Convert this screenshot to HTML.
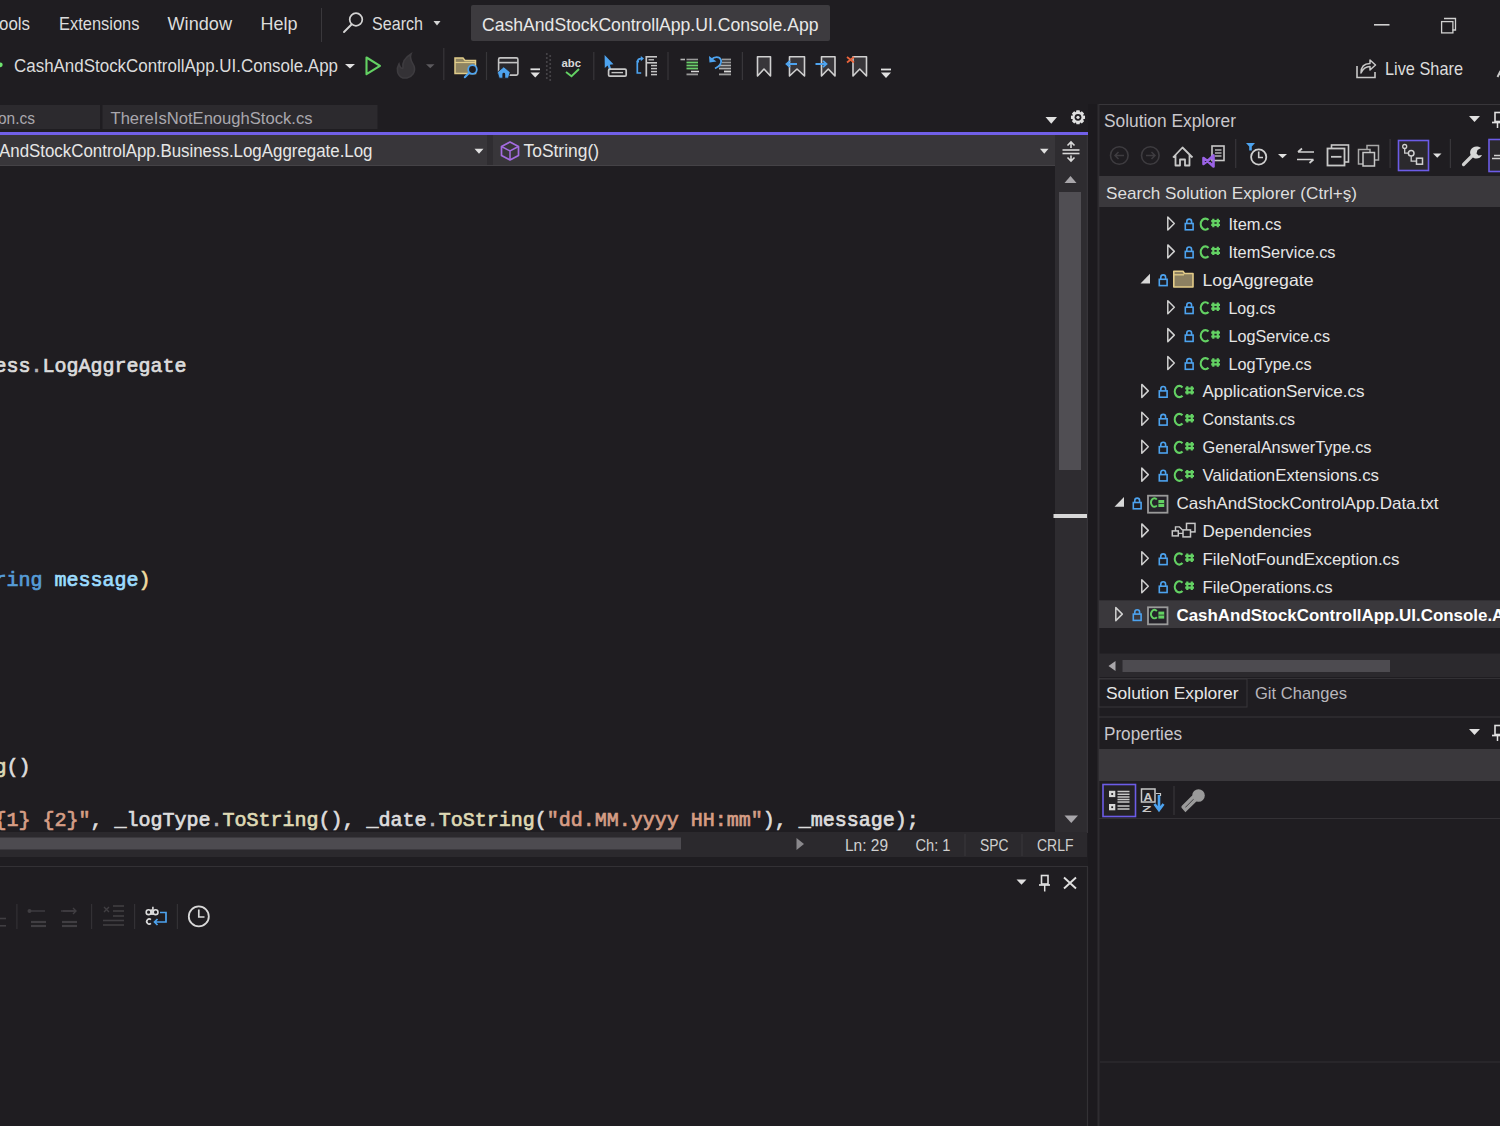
<!DOCTYPE html>
<html><head><meta charset="utf-8"><style>html,body{margin:0;padding:0;background:#1f1d21;overflow:hidden}svg{display:block}</style></head>
<body><svg width="1500" height="1126" viewBox="0 0 1500 1126">
<rect x="0" y="0" width="1500" height="1126" fill="#1f1d21" />
<text x="-1" y="30" font-family="Liberation Sans" font-size="19" fill="#dcdcdc" textLength="31.0" lengthAdjust="spacingAndGlyphs" >ools</text>
<text x="59" y="30" font-family="Liberation Sans" font-size="19" fill="#dcdcdc" textLength="80.5" lengthAdjust="spacingAndGlyphs" >Extensions</text>
<text x="167.5" y="30" font-family="Liberation Sans" font-size="19" fill="#dcdcdc" textLength="64.5" lengthAdjust="spacingAndGlyphs" >Window</text>
<text x="260.5" y="30" font-family="Liberation Sans" font-size="19" fill="#dcdcdc" textLength="37.0" lengthAdjust="spacingAndGlyphs" >Help</text>
<line x1="321.5" y1="8" x2="321.5" y2="42" stroke="#3a383c" stroke-width="1" />
<text x="372" y="30" font-family="Liberation Sans" font-size="19" fill="#dcdcdc" textLength="51.0" lengthAdjust="spacingAndGlyphs" >Search</text>
<rect x="471" y="5" width="359" height="36" fill="#3d3b3f"  rx="2"/>
<text x="482" y="31" font-family="Liberation Sans" font-size="18.5" fill="#e8e8e8" textLength="336.5" lengthAdjust="spacingAndGlyphs" >CashAndStockControllApp.UI.Console.App</text>
<text x="14" y="71.6" font-family="Liberation Sans" font-size="18" fill="#dcdcdc" textLength="324.0" lengthAdjust="spacingAndGlyphs" >CashAndStockControllApp.UI.Console.App</text>
<text x="1385" y="74.5" font-family="Liberation Sans" font-size="18.5" fill="#dcdcdc" textLength="78.0" lengthAdjust="spacingAndGlyphs" >Live Share</text>
<rect x="0" y="105" width="100" height="24" fill="#2c2a2e" />
<rect x="102.5" y="105" width="275" height="24" fill="#2c2a2e" />
<text x="-2" y="124" font-family="Liberation Sans" font-size="17" fill="#a9a7ad" textLength="37.0" lengthAdjust="spacingAndGlyphs" >on.cs</text>
<text x="110.5" y="124" font-family="Liberation Sans" font-size="17" fill="#a9a7ad" textLength="202.0" lengthAdjust="spacingAndGlyphs" >ThereIsNotEnoughStock.cs</text>
<rect x="0" y="132" width="1088" height="3" fill="#7160e8" />
<rect x="0" y="135" width="1055" height="30" fill="#38363a" />
<rect x="487" y="135" width="6" height="30" fill="#2f2d31" />
<line x1="0" y1="165.5" x2="1055" y2="165.5" stroke="#444246" stroke-width="1" />
<text x="-1" y="156.5" font-family="Liberation Sans" font-size="17.5" fill="#e6e6e6" textLength="373.5" lengthAdjust="spacingAndGlyphs" >AndStockControlApp.Business.LogAggregate.Log</text>
<text x="523.5" y="157" font-family="Liberation Sans" font-size="17.5" fill="#e6e6e6" textLength="75.5" lengthAdjust="spacingAndGlyphs" >ToString()</text>
<rect x="1088" y="104" width="9.5" height="1022" fill="#1c1a1e" />
<rect x="1055" y="135" width="33" height="698" fill="#2e2c30" />
<line x1="1087.3" y1="135" x2="1087.3" y2="833" stroke="#3a383c" stroke-width="1" />
<rect x="1059" y="192" width="22" height="278" fill="#504e53" />
<rect x="1053.5" y="514" width="33.5" height="4" fill="#d8d8d8" />
<text x="-5.5" y="372.2" font-family="Liberation Mono" font-size="20" stroke-width="0.7" xml:space="preserve"><tspan fill="#dcdcdc" stroke="#dcdcdc">ess</tspan><tspan fill="#b4b4b4" stroke="#b4b4b4">.</tspan><tspan fill="#dcdcdc" stroke="#dcdcdc">LogAggregate</tspan></text>
<text x="-5.5" y="586.0" font-family="Liberation Mono" font-size="20" stroke-width="0.7" xml:space="preserve"><tspan fill="#569cd6" stroke="#569cd6">ring</tspan><tspan fill="#dcdcdc" stroke="#dcdcdc"> </tspan><tspan fill="#9cdcfe" stroke="#9cdcfe">message</tspan><tspan fill="#f0dca0" stroke="#f0dca0">)</tspan></text>
<text x="-5.5" y="773.0" font-family="Liberation Mono" font-size="20" stroke-width="0.7" xml:space="preserve"><tspan fill="#ded9b4" stroke="#ded9b4">g</tspan><tspan fill="#dcdcdc" stroke="#dcdcdc">()</tspan></text>
<text x="-5.5" y="826.4" font-family="Liberation Mono" font-size="20" stroke-width="0.7" xml:space="preserve"><tspan fill="#d69d85" stroke="#d69d85">{1} {2}"</tspan><tspan fill="#dcdcdc" stroke="#dcdcdc">, </tspan><tspan fill="#dcdcdc" stroke="#dcdcdc">_logType</tspan><tspan fill="#b4b4b4" stroke="#b4b4b4">.</tspan><tspan fill="#ded9b4" stroke="#ded9b4">ToString</tspan><tspan fill="#dcdcdc" stroke="#dcdcdc">(), </tspan><tspan fill="#dcdcdc" stroke="#dcdcdc">_date</tspan><tspan fill="#b4b4b4" stroke="#b4b4b4">.</tspan><tspan fill="#ded9b4" stroke="#ded9b4">ToString</tspan><tspan fill="#dcdcdc" stroke="#dcdcdc">(</tspan><tspan fill="#d69d85" stroke="#d69d85">"dd.MM.yyyy HH:mm"</tspan><tspan fill="#dcdcdc" stroke="#dcdcdc">), </tspan><tspan fill="#dcdcdc" stroke="#dcdcdc">_message</tspan><tspan fill="#dcdcdc" stroke="#dcdcdc">);</tspan></text>
<rect x="0" y="832" width="1087" height="25" fill="#2b292d" />
<rect x="0" y="837.5" width="681" height="12" fill="#4d4b50" />
<text x="845" y="850.5" font-family="Liberation Sans" font-size="16.5" fill="#cfcfcf" textLength="43.0" lengthAdjust="spacingAndGlyphs" >Ln: 29</text>
<text x="915.5" y="850.5" font-family="Liberation Sans" font-size="16.5" fill="#cfcfcf" textLength="35.0" lengthAdjust="spacingAndGlyphs" >Ch: 1</text>
<line x1="965" y1="834" x2="965" y2="856" stroke="#3a383c" stroke-width="1" />
<text x="980" y="850.5" font-family="Liberation Sans" font-size="16.5" fill="#cfcfcf" textLength="28.5" lengthAdjust="spacingAndGlyphs" >SPC</text>
<line x1="1022" y1="834" x2="1022" y2="856" stroke="#3a383c" stroke-width="1" />
<text x="1037" y="850.5" font-family="Liberation Sans" font-size="16.5" fill="#cfcfcf" textLength="36.5" lengthAdjust="spacingAndGlyphs" >CRLF</text>
<line x1="0" y1="866.5" x2="1088" y2="866.5" stroke="#333135" stroke-width="1" />
<rect x="1097.5" y="104" width="2" height="1022" fill="#2e2c30" />
<line x1="1099" y1="104.5" x2="1500" y2="104.5" stroke="#38363a" stroke-width="1" />
<text x="1104" y="127" font-family="Liberation Sans" font-size="17.5" fill="#c9c7cc" textLength="132.0" lengthAdjust="spacingAndGlyphs" >Solution Explorer</text>
<rect x="1099" y="176" width="401" height="31" fill="#3a383c" />
<text x="1106" y="198.5" font-family="Liberation Sans" font-size="17" fill="#dedede" textLength="251.0" lengthAdjust="spacingAndGlyphs" >Search Solution Explorer (Ctrl+ş)</text>
<circle cx="356" cy="19.5" r="6.3" fill="none" stroke="#d4d4d4" stroke-width="1.7"/>
<line x1="351.5" y1="24.5" x2="344" y2="32" stroke="#d4d4d4" stroke-width="1.9" stroke-linecap="round"/>
<path d="M433.5 21L440.5 21L437.0 25.5Z" fill="#d4d4d4"/>
<rect x="1374" y="24" width="15.5" height="1.6" fill="#d0d0d0" />
<path d="M1444 18.5H1455.5V30H1452.5" fill="none" stroke="#d0d0d0" stroke-width="1.3" />
<rect x="1441.6" y="21.6" width="11.3" height="11.3" fill="none"  stroke="#d0d0d0" stroke-width="1.3"/>
<circle cx="0.3" cy="64.8" r="2.4" fill="#6ee36e"/>
<path d="M345 64L355 64L350.0 68.5Z" fill="#e0e0e0"/>
<path d="M366.5 57.5L380 65.8L366.5 74.2Z" fill="none" stroke="#63d163" stroke-width="2.1" stroke-linejoin="round"/>
<path d="M403 78C397 76 396 69 399 64C400 68 402 69 403 68C402 62 406 57 411 54C409 59 412 62 414 66C416 72 412 77 407 78Z" fill="#343236" stroke="#3d3b3f" stroke-width="1.6" />
<path d="M426 64.2L434.5 64.2L430.25 68.2Z" fill="#5c5a5e"/>
<line x1="443.8" y1="48" x2="443.8" y2="80" stroke="#38363a" stroke-width="1.2" />
<path d="M455 58H463L465 60.5H475.5V73.5H455Z" fill="#8f8462" stroke="#e2cd8a" stroke-width="1.5" />
<line x1="455" y1="62.5" x2="475.5" y2="62.5" stroke="#e2cd8a" stroke-width="1.2" />
<circle cx="472.5" cy="69.5" r="4.3" fill="#1f1d21" stroke="#4da3ef" stroke-width="1.8"/>
<line x1="469.3" y1="72.8" x2="464.8" y2="77.3" stroke="#4da3ef" stroke-width="2" stroke-linecap="round"/>
<line x1="486.5" y1="52" x2="486.5" y2="80" stroke="#38363a" stroke-width="1.2" />
<rect x="498.6" y="57.9" width="19.3" height="17.2" fill="#29272b"  rx="1.5" stroke="#c4c4c4" stroke-width="1.6"/>
<line x1="498.6" y1="62.6" x2="517.9" y2="62.6" stroke="#c4c4c4" stroke-width="1.6" />
<path d="M503.8 66.8L510.2 72.2L508.4 78.2H499.2L497.4 72.2Z" fill="#4da3ef" stroke="#1f1d21" stroke-width="0.8" />
<path d="M502.4 78.2V74.2A1.4 1.4 0 0 1 505.2 74.2V78.2Z" fill="#1f1d21" />
<rect x="530.5" y="68.4" width="9.5" height="1.8" fill="#e0e0e0" />
<path d="M530.5 72.5L540 72.5L535.25 77.5Z" fill="#e0e0e0"/>
<circle cx="546.8" cy="54" r="1" fill="#4a484c"/>
<circle cx="550.2" cy="56" r="1" fill="#4a484c"/>
<circle cx="546.8" cy="58" r="1" fill="#4a484c"/>
<circle cx="550.2" cy="60" r="1" fill="#4a484c"/>
<circle cx="546.8" cy="62" r="1" fill="#4a484c"/>
<circle cx="550.2" cy="64" r="1" fill="#4a484c"/>
<circle cx="546.8" cy="66" r="1" fill="#4a484c"/>
<circle cx="550.2" cy="68" r="1" fill="#4a484c"/>
<circle cx="546.8" cy="70" r="1" fill="#4a484c"/>
<circle cx="550.2" cy="72" r="1" fill="#4a484c"/>
<circle cx="546.8" cy="74" r="1" fill="#4a484c"/>
<circle cx="550.2" cy="76" r="1" fill="#4a484c"/>
<circle cx="546.8" cy="78" r="1" fill="#4a484c"/>
<circle cx="550.2" cy="80" r="1" fill="#4a484c"/>
<text x="561.5" y="66.8" font-family="Liberation Sans" font-size="11" fill="#d8d8d8" textLength="19.5" lengthAdjust="spacingAndGlyphs" font-weight="bold" >abc</text>
<path d="M566 72L571.5 76.2L579 69" fill="none" stroke="#63d163" stroke-width="1.9" />
<line x1="593.8" y1="52" x2="593.8" y2="80" stroke="#38363a" stroke-width="1.2" />
<path d="M604.6 55L604.8 68L607.6 65.5L609.5 70.5L611.5 69.7L609.8 64.8L613.5 64.3Z" fill="#4da3ef" />
<rect x="608.6" y="69.2" width="17.6" height="6.9" fill="none"  rx="1.2" stroke="#c8c8c8" stroke-width="1.7"/>
<line x1="611.5" y1="72.6" x2="623" y2="72.6" stroke="#c4c4c4" stroke-width="1.4" />
<path d="M641.2 73H637.3V61.6H639" fill="none" stroke="#4da3ef" stroke-width="1.7" />
<path d="M637.5 62C637.5 59.5 639 58.6 641.2 58.6" fill="none" stroke="#4da3ef" stroke-width="1.7" />
<path d="M640.8 55.9L644 58.6L640.8 61.3Z" fill="#4da3ef" />
<line x1="646.3" y1="56" x2="646.3" y2="76.5" stroke="#c8c8c8" stroke-width="1.7" />
<line x1="646.3" y1="56.8" x2="657" y2="56.8" stroke="#c8c8c8" stroke-width="1.6" />
<line x1="648.5" y1="59.8" x2="654" y2="59.8" stroke="#c8c8c8" stroke-width="1.3" />
<line x1="646.3" y1="62.8" x2="657" y2="62.8" stroke="#c8c8c8" stroke-width="1.6" />
<line x1="651" y1="65.6" x2="657" y2="65.6" stroke="#c4c4c4" stroke-width="1.5" />
<line x1="651" y1="68.6" x2="657" y2="68.6" stroke="#c4c4c4" stroke-width="1.5" />
<line x1="651" y1="71.6" x2="657" y2="71.6" stroke="#c4c4c4" stroke-width="1.5" />
<line x1="651" y1="74.6" x2="657" y2="74.6" stroke="#c4c4c4" stroke-width="1.5" />
<line x1="668" y1="52" x2="668" y2="80" stroke="#38363a" stroke-width="1.2" />
<line x1="680.5" y1="59.5" x2="685" y2="59.5" stroke="#b8b8b8" stroke-width="1.6" />
<line x1="686.5" y1="59.5" x2="698" y2="59.5" stroke="#9a9a9a" stroke-width="1.6" />
<line x1="686.5" y1="62.5" x2="698" y2="62.5" stroke="#6cd06c" stroke-width="1.8" />
<line x1="686.5" y1="65.5" x2="698" y2="65.5" stroke="#6cd06c" stroke-width="1.8" />
<line x1="686.5" y1="68.5" x2="698" y2="68.5" stroke="#6cd06c" stroke-width="1.8" />
<line x1="691" y1="71.5" x2="699" y2="71.5" stroke="#d8d8d8" stroke-width="1.5" />
<line x1="686.5" y1="74.4" x2="698" y2="74.4" stroke="#9a9a9a" stroke-width="1.8" />
<line x1="722" y1="59.5" x2="731" y2="59.5" stroke="#9a9a9a" stroke-width="1.8" />
<line x1="722" y1="62.5" x2="731" y2="62.5" stroke="#9a9a9a" stroke-width="1.8" />
<line x1="719" y1="65.5" x2="731" y2="65.5" stroke="#b0b0b0" stroke-width="1.8" />
<line x1="719" y1="68.5" x2="731" y2="68.5" stroke="#b0b0b0" stroke-width="1.8" />
<line x1="724" y1="71.5" x2="731" y2="71.5" stroke="#d8d8d8" stroke-width="1.8" />
<line x1="719" y1="74.4" x2="731" y2="74.4" stroke="#a0a0a0" stroke-width="1.8" />
<path d="M711.5 59.5C714 56.5 719.5 56 721 60C722 63.5 719 66.5 715 68.5" fill="none" stroke="#4da3ef" stroke-width="1.9" />
<path d="M709 56L716.5 61.5L709.5 62.5Z" fill="#4da3ef" />
<line x1="742.4" y1="52" x2="742.4" y2="80" stroke="#38363a" stroke-width="1.2" />
<path d="M757.5 56.8H770.5V76L764.0 69L757.5 76Z" fill="#38363a" stroke="#d0d0d0" stroke-width="1.6" stroke-linejoin="round"/>
<path d="M789.5 56.8H804.5V76L797.0 69L789.5 76Z" fill="#38363a" stroke="#d0d0d0" stroke-width="1.6" stroke-linejoin="round"/>
<path d="M797 64H786.5M790 60.8L786.5 64L790 67.2" fill="none" stroke="#4da3ef" stroke-width="1.8" />
<path d="M821.5 56.8H835V76L828.25 69L821.5 76Z" fill="#38363a" stroke="#d0d0d0" stroke-width="1.6" stroke-linejoin="round"/>
<path d="M815.5 64H826.5M823 60.8L826.5 64L823 67.2" fill="none" stroke="#4da3ef" stroke-width="1.8" />
<path d="M853 56.8H866.5V76L859.75 69L853 76Z" fill="#38363a" stroke="#d0d0d0" stroke-width="1.6" stroke-linejoin="round"/>
<path d="M847 57L854 62.5M854 57L847 62.5" fill="none" stroke="#e8643c" stroke-width="1.8" />
<rect x="881" y="68.6" width="10" height="1.8" fill="#e0e0e0" />
<path d="M881 72.6L891 72.6L886.0 78Z" fill="#e0e0e0"/>
<path d="M1357 66V77.5H1375V72" fill="none" stroke="#c8c8c8" stroke-width="1.6" />
<path d="M1361 73C1361 66 1365 63.5 1370 63.5V60L1375.5 65L1370 70V66.5C1366 66.5 1363 68.5 1361 73Z" fill="none" stroke="#c8c8c8" stroke-width="1.5" stroke-linejoin="round"/>
<line x1="1497.5" y1="77" x2="1500.5" y2="71" stroke="#c8c8c8" stroke-width="2" />
<path d="M1045.5 117L1057 117L1051.25 123.8Z" fill="#e0e0e0"/>
<path d="M1085.03 115.73L1085.03 118.87L1082.75 119.42L1082.86 119.16L1084.08 121.16L1081.86 123.38L1079.86 122.16L1080.12 122.05L1079.57 124.33L1076.43 124.33L1075.88 122.05L1076.14 122.16L1074.14 123.38L1071.92 121.16L1073.14 119.16L1073.25 119.42L1070.97 118.87L1070.97 115.73L1073.25 115.18L1073.14 115.44L1071.92 113.44L1074.14 111.22L1076.14 112.44L1075.88 112.55L1076.43 110.27L1079.57 110.27L1080.12 112.55L1079.86 112.44L1081.86 111.22L1084.08 113.44L1082.86 115.44L1082.75 115.18Z" fill="#e0e0e0" />
<circle cx="1078" cy="117.3" r="3.4" fill="#1f1d21"/>
<circle cx="1078" cy="117.3" r="1.6" fill="#e0e0e0"/>
<path d="M474.5 148.8L483.5 148.8L479.0 153.8Z" fill="#e0e0e0"/>
<path d="M1040 148.8L1048.5 148.8L1044.25 153.8Z" fill="#e0e0e0"/>
<path d="M510 142L518.5 146.5V155.5L510 160L501.5 155.5V146.5Z" fill="none" stroke="#a46ce0" stroke-width="1.7" stroke-linejoin="round"/>
<path d="M501.5 146.5L510 151L518.5 146.5M510 151V160" fill="none" stroke="#a46ce0" stroke-width="1.5" />
<line x1="1062.5" y1="150" x2="1079.5" y2="150" stroke="#d8d8d8" stroke-width="1.6" />
<line x1="1062.5" y1="153.5" x2="1079.5" y2="153.5" stroke="#d8d8d8" stroke-width="1.6" />
<path d="M1071 142V148M1067.5 145.5L1071 142L1074.5 145.5" fill="none" stroke="#d8d8d8" stroke-width="1.6" />
<path d="M1071 155.5V161M1067.5 157.5L1071 161L1074.5 157.5" fill="none" stroke="#d8d8d8" stroke-width="1.6" />
<path d="M1064.5 183H1076.5L1070.5 176Z" fill="#a8a6aa"/>
<path d="M1064.5 815.5L1078 815.5L1071.25 823Z" fill="#a8a6aa"/>
<path d="M796.5 838V850L804 844Z" fill="#8a888c"/>
<path d="M1016.5 879.5L1026.5 879.5L1021.5 884.8Z" fill="#e0e0e0"/>
<rect x="1041.5" y="875.5" width="6.5" height="8.5" fill="none"  stroke="#e0e0e0" stroke-width="1.6"/>
<line x1="1039" y1="885" x2="1050" y2="885" stroke="#e0e0e0" stroke-width="1.7" />
<line x1="1044.7" y1="885" x2="1044.7" y2="891.5" stroke="#e0e0e0" stroke-width="1.5" />
<path d="M1064 877.5L1076 888.5M1076 877.5L1064 888.5" fill="none" stroke="#e0e0e0" stroke-width="1.9" />
<line x1="0" y1="918.5" x2="6" y2="918.5" stroke="#403e42" stroke-width="1.6" />
<line x1="0" y1="925.8" x2="6" y2="925.8" stroke="#403e42" stroke-width="1.6" />
<line x1="16.9" y1="904" x2="16.9" y2="929" stroke="#333135" stroke-width="1.2" />
<line x1="30" y1="911" x2="45" y2="911" stroke="#403e42" stroke-width="1.4" />
<line x1="31" y1="922" x2="46" y2="922" stroke="#403e42" stroke-width="2.2" />
<line x1="31" y1="926" x2="46" y2="926" stroke="#403e42" stroke-width="2.2" />
<line x1="61" y1="911" x2="76" y2="911" stroke="#403e42" stroke-width="1.4" />
<line x1="62" y1="922" x2="77" y2="922" stroke="#403e42" stroke-width="2.2" />
<line x1="62" y1="926" x2="77" y2="926" stroke="#403e42" stroke-width="2.2" />
<circle cx="29.5" cy="911" r="2" fill="#403e42"/>
<path d="M63 911H76M73 908L76 911L73 914" fill="none" stroke="#403e42" stroke-width="1.4" />
<line x1="91.6" y1="904" x2="91.6" y2="929" stroke="#333135" stroke-width="1.2" />
<path d="M104 907L109 912M109 907L104 912" fill="none" stroke="#403e42" stroke-width="1.4" />
<line x1="113" y1="906" x2="124" y2="906" stroke="#403e42" stroke-width="1.6" />
<line x1="113" y1="911" x2="124" y2="911" stroke="#403e42" stroke-width="1.6" />
<line x1="113" y1="916" x2="124" y2="916" stroke="#403e42" stroke-width="1.6" />
<line x1="103" y1="920.5" x2="124" y2="920.5" stroke="#403e42" stroke-width="1.6" />
<line x1="103" y1="925" x2="124" y2="925" stroke="#403e42" stroke-width="1.6" />
<line x1="134.6" y1="904" x2="134.6" y2="929" stroke="#333135" stroke-width="1.2" />
<circle cx="148.6" cy="912.2" r="2.4" fill="none" stroke="#dcdcdc" stroke-width="1.6"/>
<line x1="151.4" y1="909.3" x2="151.4" y2="914.9" stroke="#dcdcdc" stroke-width="1.6" />
<circle cx="155.6" cy="912.2" r="2.4" fill="none" stroke="#dcdcdc" stroke-width="1.6"/>
<line x1="152.9" y1="906.8" x2="152.9" y2="914.9" stroke="#dcdcdc" stroke-width="1.6" />
<path d="M150.9 919.6A2.5 2.5 0 1 0 150.9 923.4" fill="none" stroke="#dcdcdc" stroke-width="1.7" />
<path d="M160 912.5H166V922H154.5M157.5 919L154.5 922L157.5 925" fill="none" stroke="#4da3ef" stroke-width="1.7" />
<line x1="177.4" y1="904" x2="177.4" y2="929" stroke="#333135" stroke-width="1.2" />
<circle cx="198.8" cy="916.4" r="10" fill="none" stroke="#d8d8d8" stroke-width="1.8"/>
<path d="M198.8 909.5V917H204.5" fill="none" stroke="#d8d8d8" stroke-width="1.7" />
<path d="M1469 116L1480 116L1474.5 122Z" fill="#e0e0e0"/>
<rect x="1495" y="112.5" width="6" height="9" fill="none"  stroke="#e0e0e0" stroke-width="1.6"/>
<line x1="1492" y1="122.5" x2="1500" y2="122.5" stroke="#e0e0e0" stroke-width="1.7" />
<line x1="1497.5" y1="122.5" x2="1497.5" y2="128" stroke="#e0e0e0" stroke-width="1.5" />
<circle cx="1119.3" cy="155.5" r="8.8" fill="none" stroke="#3e3c40" stroke-width="1.6"/>
<path d="M1124 155.5H1115M1118.5 152L1115 155.5L1118.5 159" fill="none" stroke="#3e3c40" stroke-width="1.5" />
<circle cx="1150.3" cy="155.5" r="8.8" fill="none" stroke="#3e3c40" stroke-width="1.6"/>
<path d="M1146 155.5H1155M1151.5 152L1155 155.5L1151.5 159" fill="none" stroke="#3e3c40" stroke-width="1.5" />
<path d="M1173 157.5L1182.5 147.5L1192.5 157.5M1175.5 155V165.5H1180V159.5H1185V165.5H1189.5V155" fill="none" stroke="#c8c8c8" stroke-width="1.8" stroke-linejoin="round"/>
<rect x="1212" y="146" width="12" height="14.5" fill="#1f1d21"  stroke="#c8c8c8" stroke-width="1.6"/>
<line x1="1215" y1="150" x2="1221.5" y2="150" stroke="#c8c8c8" stroke-width="1.3" />
<line x1="1215" y1="153" x2="1221.5" y2="153" stroke="#c8c8c8" stroke-width="1.3" />
<line x1="1215" y1="156" x2="1221.5" y2="156" stroke="#c8c8c8" stroke-width="1.3" />
<path d="M1203.5 158L1207.5 161L1213.5 155.5V166.5L1207.5 161L1203.5 164Z" fill="none" stroke="#9b63e6" stroke-width="2.6" stroke-linejoin="round"/>
<line x1="1235.7" y1="139" x2="1235.7" y2="168" stroke="#38363a" stroke-width="1.2" />
<path d="M1246 143H1255L1251.8 146.5V150.5H1249.2V146.5Z" fill="#4da3ef" />
<circle cx="1258.7" cy="157" r="7.6" fill="none" stroke="#d0d0d0" stroke-width="1.8"/>
<path d="M1258.7 151.5V157.5H1263" fill="none" stroke="#d0d0d0" stroke-width="1.6" />
<path d="M1278 154L1287 154L1282.5 158.2Z" fill="#e0e0e0"/>
<path d="M1314 152H1298M1302 148.5L1298 152M1297 159.5H1313.5M1309.5 163L1313.5 159.5" fill="none" stroke="#d0d0d0" stroke-width="1.7" />
<rect x="1331.5" y="145" width="17" height="17" fill="none"  stroke="#c8c8c8" stroke-width="1.6"/>
<rect x="1327.5" y="148.5" width="17" height="17" fill="#1f1d21"  stroke="#c8c8c8" stroke-width="1.8"/>
<line x1="1331" y1="156.8" x2="1341.5" y2="156.8" stroke="#c8c8c8" stroke-width="1.8" />
<rect x="1367" y="145.5" width="11.5" height="14.5" fill="none"  stroke="#a8a8a8" stroke-width="1.5"/>
<rect x="1358.5" y="149.5" width="11.5" height="14.5" fill="#1f1d21"  stroke="#a8a8a8" stroke-width="1.5"/>
<rect x="1363" y="152.5" width="11.5" height="13.5" fill="#2a282c"  stroke="#c8c8c8" stroke-width="1.5"/>
<line x1="1390.1" y1="139" x2="1390.1" y2="168" stroke="#38363a" stroke-width="1.2" />
<rect x="1398.5" y="140.5" width="30" height="30" fill="#2b292d"  stroke="#6c5ce7" stroke-width="1.6"/>
<circle cx="1404.7" cy="146.5" r="2" fill="none" stroke="#d0d0d0" stroke-width="1.3"/>
<circle cx="1411.2" cy="153.2" r="2.8" fill="none" stroke="#d0d0d0" stroke-width="1.5"/>
<rect x="1416.5" y="158.2" width="6" height="6" fill="none"  stroke="#d0d0d0" stroke-width="1.5"/>
<path d="M1404.7 148.5V153.2H1408.4M1411.2 156V161.2H1416.5" fill="none" stroke="#d0d0d0" stroke-width="1.3" />
<path d="M1433 153.5L1441.5 153.5L1437.25 157.8Z" fill="#e0e0e0"/>
<line x1="1450.4" y1="139" x2="1450.4" y2="168" stroke="#38363a" stroke-width="1.2" />
<path d="M1463.5 164.5L1472.5 155.5" fill="none" stroke="#d0d0d0" stroke-width="3.2" stroke-linecap="round"/>
<path d="M1473 147.5C1469 150 1469.5 155 1472.5 157C1475.5 160 1480.5 158.5 1482 155L1478.5 155.5L1476.5 153.5L1477.5 150L1481 148C1478 146 1475 146.3 1473 147.5Z" fill="#d8d8d8" />
<rect x="1489" y="139.5" width="14" height="32" fill="#2b292d"  stroke="#6c5ce7" stroke-width="1.6"/>
<path d="M1494 155.5H1500M1492 158.5H1500" fill="none" stroke="#d0d0d0" stroke-width="1.4" />
<path d="M1469 729L1480 729L1474.5 735Z" fill="#e0e0e0"/>
<rect x="1495" y="725.5" width="6" height="9" fill="none"  stroke="#e0e0e0" stroke-width="1.6"/>
<line x1="1492" y1="735.5" x2="1500" y2="735.5" stroke="#e0e0e0" stroke-width="1.7" />
<line x1="1497.5" y1="735.5" x2="1497.5" y2="741" stroke="#e0e0e0" stroke-width="1.5" />
<rect x="1103" y="784.5" width="32.5" height="32" fill="#242226"  stroke="#6c5ce7" stroke-width="1.6"/>
<rect x="1109" y="790.8" width="6.3" height="6.3" fill="#d8d8d8" />
<rect x="1111.3" y="793.0999999999999" width="1.8" height="1.8" fill="#1f1d21" />
<rect x="1109" y="804" width="6.3" height="6.3" fill="#d8d8d8" />
<rect x="1111.3" y="806.3" width="1.8" height="1.8" fill="#1f1d21" />
<line x1="1117.5" y1="791.5" x2="1129.5" y2="791.5" stroke="#c8c8c8" stroke-width="1.5" />
<line x1="1117.5" y1="794.3" x2="1129.5" y2="794.3" stroke="#c8c8c8" stroke-width="1.5" />
<line x1="1117.5" y1="797" x2="1129.5" y2="797" stroke="#c8c8c8" stroke-width="1.5" />
<line x1="1117.5" y1="799.5" x2="1129.5" y2="799.5" stroke="#c8c8c8" stroke-width="1.5" />
<line x1="1117.5" y1="802" x2="1129.5" y2="802" stroke="#c8c8c8" stroke-width="1.5" />
<line x1="1117.5" y1="806" x2="1129.5" y2="806" stroke="#c8c8c8" stroke-width="1.5" />
<line x1="1117.5" y1="809" x2="1129.5" y2="809" stroke="#c8c8c8" stroke-width="1.5" />
<rect x="1141.5" y="789" width="13.5" height="13" fill="none"  stroke="#c8c8c8" stroke-width="1.5"/>
<text x="1143.5" y="800.5" font-family="Liberation Sans" font-size="10" fill="#c8c8c8" textLength="9.0" lengthAdjust="spacingAndGlyphs" font-weight="bold" >A</text>
<text x="1142" y="811.5" font-family="Liberation Sans" font-size="9" fill="#c8c8c8" textLength="9.5" lengthAdjust="spacingAndGlyphs" font-weight="bold" >Z</text>
<path d="M1159 795V808M1154.5 804L1159 810L1163.5 804" fill="none" stroke="#4da3ef" stroke-width="2.6" />
<path d="M1156 793.5H1160.5V796" fill="none" stroke="#c8c8c8" stroke-width="1.2" />
<line x1="1174" y1="786" x2="1174" y2="815" stroke="#38363a" stroke-width="1.2" />
<path d="M1183 807L1192.5 797.5M1183 807L1185.5 810L1195 800.5" fill="none" stroke="#9a9a9a" stroke-width="3.2" stroke-linecap="round"/>
<circle cx="1198.5" cy="795.5" r="6.3" fill="#9a9a9a"/>
<path d="M1167.8 217.0L1174.3 223.5L1167.8 230.0Z" fill="none" stroke="#d0d0d0" stroke-width="1.5" stroke-linejoin="round"/>
<path d="M1186.8 223.5V221.5A2.4 2.4 0 0 1 1191.6 221.5V223.5" fill="none" stroke="#4da3ef" stroke-width="1.6"/>
<rect x="1185.3" y="223.5" width="7.8" height="6.3" fill="none" stroke="#4da3ef" stroke-width="1.6"/>
<path d="M1208.5 220.0A4.6 5.6 0 1 0 1208.5 228.3" fill="none" stroke="#63d163" stroke-width="2.2"/>
<path d="M1213.3 218.8V227.2M1217.8 218.8V227.2M1211.2 221.1H1220M1211.2 224.9H1220" fill="none" stroke="#63d163" stroke-width="2.2"/>
<text x="1228.5" y="230.0" font-family="Liberation Sans" font-size="16.5" fill="#e6e6e6" textLength="53.0" lengthAdjust="spacingAndGlyphs" >Item.cs</text>
<path d="M1167.8 244.89999999999998L1174.3 251.39999999999998L1167.8 257.9Z" fill="none" stroke="#d0d0d0" stroke-width="1.5" stroke-linejoin="round"/>
<path d="M1186.8 251.39999999999998V249.39999999999998A2.4 2.4 0 0 1 1191.6 249.39999999999998V251.39999999999998" fill="none" stroke="#4da3ef" stroke-width="1.6"/>
<rect x="1185.3" y="251.39999999999998" width="7.8" height="6.3" fill="none" stroke="#4da3ef" stroke-width="1.6"/>
<path d="M1208.5 247.89999999999998A4.6 5.6 0 1 0 1208.5 256.2" fill="none" stroke="#63d163" stroke-width="2.2"/>
<path d="M1213.3 246.7V255.09999999999997M1217.8 246.7V255.09999999999997M1211.2 248.99999999999997H1220M1211.2 252.79999999999998H1220" fill="none" stroke="#63d163" stroke-width="2.2"/>
<text x="1228.5" y="257.9" font-family="Liberation Sans" font-size="16.5" fill="#e6e6e6" textLength="107.0" lengthAdjust="spacingAndGlyphs" >ItemService.cs</text>
<path d="M1140.5 283.5L1150 283.5L1150 273.8Z" fill="#d8d8d8"/>
<path d="M1160.8 279.3V277.3A2.4 2.4 0 0 1 1165.6 277.3V279.3" fill="none" stroke="#4da3ef" stroke-width="1.6"/>
<rect x="1159.3" y="279.3" width="7.8" height="6.3" fill="none" stroke="#4da3ef" stroke-width="1.6"/>
<path d="M1173.8 271.3H1183L1184.5 273.5H1193V287.0H1173.8Z" fill="#8c8061" stroke="#e3cb88" stroke-width="1.6" stroke-linejoin="round"/>
<line x1="1173.8" y1="274.8" x2="1184" y2="274.8" stroke="#e3cb88" stroke-width="1.3"/>
<text x="1202.5" y="285.8" font-family="Liberation Sans" font-size="16.5" fill="#e6e6e6" textLength="111.0" lengthAdjust="spacingAndGlyphs" >LogAggregate</text>
<path d="M1167.8 300.7L1174.3 307.2L1167.8 313.7Z" fill="none" stroke="#d0d0d0" stroke-width="1.5" stroke-linejoin="round"/>
<path d="M1186.8 307.2V305.2A2.4 2.4 0 0 1 1191.6 305.2V307.2" fill="none" stroke="#4da3ef" stroke-width="1.6"/>
<rect x="1185.3" y="307.2" width="7.8" height="6.3" fill="none" stroke="#4da3ef" stroke-width="1.6"/>
<path d="M1208.5 303.7A4.6 5.6 0 1 0 1208.5 312.0" fill="none" stroke="#63d163" stroke-width="2.2"/>
<path d="M1213.3 302.5V310.9M1217.8 302.5V310.9M1211.2 304.8H1220M1211.2 308.59999999999997H1220" fill="none" stroke="#63d163" stroke-width="2.2"/>
<text x="1228.5" y="313.7" font-family="Liberation Sans" font-size="16.5" fill="#e6e6e6" textLength="47.0" lengthAdjust="spacingAndGlyphs" >Log.cs</text>
<path d="M1167.8 328.6L1174.3 335.1L1167.8 341.6Z" fill="none" stroke="#d0d0d0" stroke-width="1.5" stroke-linejoin="round"/>
<path d="M1186.8 335.1V333.1A2.4 2.4 0 0 1 1191.6 333.1V335.1" fill="none" stroke="#4da3ef" stroke-width="1.6"/>
<rect x="1185.3" y="335.1" width="7.8" height="6.3" fill="none" stroke="#4da3ef" stroke-width="1.6"/>
<path d="M1208.5 331.6A4.6 5.6 0 1 0 1208.5 339.90000000000003" fill="none" stroke="#63d163" stroke-width="2.2"/>
<path d="M1213.3 330.40000000000003V338.8M1217.8 330.40000000000003V338.8M1211.2 332.70000000000005H1220M1211.2 336.5H1220" fill="none" stroke="#63d163" stroke-width="2.2"/>
<text x="1228.5" y="341.6" font-family="Liberation Sans" font-size="16.5" fill="#e6e6e6" textLength="101.5" lengthAdjust="spacingAndGlyphs" >LogService.cs</text>
<path d="M1167.8 356.5L1174.3 363.0L1167.8 369.5Z" fill="none" stroke="#d0d0d0" stroke-width="1.5" stroke-linejoin="round"/>
<path d="M1186.8 363.0V361.0A2.4 2.4 0 0 1 1191.6 361.0V363.0" fill="none" stroke="#4da3ef" stroke-width="1.6"/>
<rect x="1185.3" y="363.0" width="7.8" height="6.3" fill="none" stroke="#4da3ef" stroke-width="1.6"/>
<path d="M1208.5 359.5A4.6 5.6 0 1 0 1208.5 367.8" fill="none" stroke="#63d163" stroke-width="2.2"/>
<path d="M1213.3 358.3V366.7M1217.8 358.3V366.7M1211.2 360.6H1220M1211.2 364.4H1220" fill="none" stroke="#63d163" stroke-width="2.2"/>
<text x="1228.5" y="369.5" font-family="Liberation Sans" font-size="16.5" fill="#e6e6e6" textLength="83.0" lengthAdjust="spacingAndGlyphs" >LogType.cs</text>
<path d="M1141.8 384.4L1148.3 390.9L1141.8 397.4Z" fill="none" stroke="#d0d0d0" stroke-width="1.5" stroke-linejoin="round"/>
<path d="M1160.8 390.9V388.9A2.4 2.4 0 0 1 1165.6 388.9V390.9" fill="none" stroke="#4da3ef" stroke-width="1.6"/>
<rect x="1159.3" y="390.9" width="7.8" height="6.3" fill="none" stroke="#4da3ef" stroke-width="1.6"/>
<path d="M1182.5 387.4A4.6 5.6 0 1 0 1182.5 395.7" fill="none" stroke="#63d163" stroke-width="2.2"/>
<path d="M1187.3 386.2V394.59999999999997M1191.8 386.2V394.59999999999997M1185.2 388.5H1194M1185.2 392.29999999999995H1194" fill="none" stroke="#63d163" stroke-width="2.2"/>
<text x="1202.5" y="397.4" font-family="Liberation Sans" font-size="16.5" fill="#e6e6e6" textLength="162.0" lengthAdjust="spacingAndGlyphs" >ApplicationService.cs</text>
<path d="M1141.8 412.29999999999995L1148.3 418.79999999999995L1141.8 425.29999999999995Z" fill="none" stroke="#d0d0d0" stroke-width="1.5" stroke-linejoin="round"/>
<path d="M1160.8 418.79999999999995V416.79999999999995A2.4 2.4 0 0 1 1165.6 416.79999999999995V418.79999999999995" fill="none" stroke="#4da3ef" stroke-width="1.6"/>
<rect x="1159.3" y="418.79999999999995" width="7.8" height="6.3" fill="none" stroke="#4da3ef" stroke-width="1.6"/>
<path d="M1182.5 415.29999999999995A4.6 5.6 0 1 0 1182.5 423.59999999999997" fill="none" stroke="#63d163" stroke-width="2.2"/>
<path d="M1187.3 414.09999999999997V422.49999999999994M1191.8 414.09999999999997V422.49999999999994M1185.2 416.4H1194M1185.2 420.19999999999993H1194" fill="none" stroke="#63d163" stroke-width="2.2"/>
<text x="1202.5" y="425.29999999999995" font-family="Liberation Sans" font-size="16.5" fill="#e6e6e6" textLength="92.5" lengthAdjust="spacingAndGlyphs" >Constants.cs</text>
<path d="M1141.8 440.2L1148.3 446.7L1141.8 453.2Z" fill="none" stroke="#d0d0d0" stroke-width="1.5" stroke-linejoin="round"/>
<path d="M1160.8 446.7V444.7A2.4 2.4 0 0 1 1165.6 444.7V446.7" fill="none" stroke="#4da3ef" stroke-width="1.6"/>
<rect x="1159.3" y="446.7" width="7.8" height="6.3" fill="none" stroke="#4da3ef" stroke-width="1.6"/>
<path d="M1182.5 443.2A4.6 5.6 0 1 0 1182.5 451.5" fill="none" stroke="#63d163" stroke-width="2.2"/>
<path d="M1187.3 442.0V450.4M1191.8 442.0V450.4M1185.2 444.3H1194M1185.2 448.09999999999997H1194" fill="none" stroke="#63d163" stroke-width="2.2"/>
<text x="1202.5" y="453.2" font-family="Liberation Sans" font-size="16.5" fill="#e6e6e6" textLength="169.0" lengthAdjust="spacingAndGlyphs" >GeneralAnswerType.cs</text>
<path d="M1141.8 468.1L1148.3 474.6L1141.8 481.1Z" fill="none" stroke="#d0d0d0" stroke-width="1.5" stroke-linejoin="round"/>
<path d="M1160.8 474.6V472.6A2.4 2.4 0 0 1 1165.6 472.6V474.6" fill="none" stroke="#4da3ef" stroke-width="1.6"/>
<rect x="1159.3" y="474.6" width="7.8" height="6.3" fill="none" stroke="#4da3ef" stroke-width="1.6"/>
<path d="M1182.5 471.1A4.6 5.6 0 1 0 1182.5 479.40000000000003" fill="none" stroke="#63d163" stroke-width="2.2"/>
<path d="M1187.3 469.90000000000003V478.3M1191.8 469.90000000000003V478.3M1185.2 472.20000000000005H1194M1185.2 476.0H1194" fill="none" stroke="#63d163" stroke-width="2.2"/>
<text x="1202.5" y="481.1" font-family="Liberation Sans" font-size="16.5" fill="#e6e6e6" textLength="176.5" lengthAdjust="spacingAndGlyphs" >ValidationExtensions.cs</text>
<path d="M1114.5 506.7L1124 506.7L1124 497.0Z" fill="#d8d8d8"/>
<path d="M1134.8 502.5V500.5A2.4 2.4 0 0 1 1139.6 500.5V502.5" fill="none" stroke="#4da3ef" stroke-width="1.6"/>
<rect x="1133.3" y="502.5" width="7.8" height="6.3" fill="none" stroke="#4da3ef" stroke-width="1.6"/>
<rect x="1148" y="495.7" width="19.5" height="17" fill="#25232a" stroke="#9a9a9a" stroke-width="1.8"/>
<path d="M1156.8 499.5A3.3 4.3 0 1 0 1156.8 505.5" fill="none" stroke="#63d163" stroke-width="1.9"/>
<rect x="1158.4" y="500.0" width="5.8" height="7" fill="#63d163"/>
<line x1="1158.4" y1="503.5" x2="1164.2" y2="503.5" stroke="#25232a" stroke-width="0.8"/>
<text x="1176.5" y="509.0" font-family="Liberation Sans" font-size="16.5" fill="#e6e6e6" textLength="262.0" lengthAdjust="spacingAndGlyphs" >CashAndStockControlApp.Data.txt</text>
<path d="M1141.8 523.9L1148.3 530.4L1141.8 536.9Z" fill="none" stroke="#d0d0d0" stroke-width="1.5" stroke-linejoin="round"/>
<rect x="1186.5" y="523.4" width="8.5" height="8.5" fill="none" stroke="#c8c8c8" stroke-width="1.5"/>
<rect x="1183.0" y="529.9" width="7.5" height="7" fill="#1f1d21" stroke="#c8c8c8" stroke-width="1.5"/>
<rect x="1172.3" y="530.9" width="6" height="5" fill="none" stroke="#c8c8c8" stroke-width="1.5"/>
<path d="M1178.3 533.4H1183.0M1175.5 530.9V526.9H1179.5L1182.5 529.9" fill="none" stroke="#c8c8c8" stroke-width="1.4"/>
<text x="1202.5" y="536.9" font-family="Liberation Sans" font-size="16.5" fill="#e6e6e6" textLength="109.0" lengthAdjust="spacingAndGlyphs" >Dependencies</text>
<path d="M1141.8 551.8L1148.3 558.3L1141.8 564.8Z" fill="none" stroke="#d0d0d0" stroke-width="1.5" stroke-linejoin="round"/>
<path d="M1160.8 558.3V556.3A2.4 2.4 0 0 1 1165.6 556.3V558.3" fill="none" stroke="#4da3ef" stroke-width="1.6"/>
<rect x="1159.3" y="558.3" width="7.8" height="6.3" fill="none" stroke="#4da3ef" stroke-width="1.6"/>
<path d="M1182.5 554.8A4.6 5.6 0 1 0 1182.5 563.0999999999999" fill="none" stroke="#63d163" stroke-width="2.2"/>
<path d="M1187.3 553.5999999999999V562.0M1191.8 553.5999999999999V562.0M1185.2 555.9H1194M1185.2 559.6999999999999H1194" fill="none" stroke="#63d163" stroke-width="2.2"/>
<text x="1202.5" y="564.8" font-family="Liberation Sans" font-size="16.5" fill="#e6e6e6" textLength="197.0" lengthAdjust="spacingAndGlyphs" >FileNotFoundException.cs</text>
<path d="M1141.8 579.7L1148.3 586.2L1141.8 592.7Z" fill="none" stroke="#d0d0d0" stroke-width="1.5" stroke-linejoin="round"/>
<path d="M1160.8 586.2V584.2A2.4 2.4 0 0 1 1165.6 584.2V586.2" fill="none" stroke="#4da3ef" stroke-width="1.6"/>
<rect x="1159.3" y="586.2" width="7.8" height="6.3" fill="none" stroke="#4da3ef" stroke-width="1.6"/>
<path d="M1182.5 582.7A4.6 5.6 0 1 0 1182.5 591.0" fill="none" stroke="#63d163" stroke-width="2.2"/>
<path d="M1187.3 581.5V589.9000000000001M1191.8 581.5V589.9000000000001M1185.2 583.8000000000001H1194M1185.2 587.6H1194" fill="none" stroke="#63d163" stroke-width="2.2"/>
<text x="1202.5" y="592.7" font-family="Liberation Sans" font-size="16.5" fill="#e6e6e6" textLength="130.0" lengthAdjust="spacingAndGlyphs" >FileOperations.cs</text>
<rect x="1099" y="600.3" width="401" height="27.7" fill="#3a383c" />
<path d="M1115.8 607.5999999999999L1122.3 614.0999999999999L1115.8 620.5999999999999Z" fill="none" stroke="#d0d0d0" stroke-width="1.5" stroke-linejoin="round"/>
<path d="M1134.8 614.0999999999999V612.0999999999999A2.4 2.4 0 0 1 1139.6 612.0999999999999V614.0999999999999" fill="none" stroke="#4da3ef" stroke-width="1.6"/>
<rect x="1133.3" y="614.0999999999999" width="7.8" height="6.3" fill="none" stroke="#4da3ef" stroke-width="1.6"/>
<rect x="1148" y="607.3" width="19.5" height="17" fill="#25232a" stroke="#9a9a9a" stroke-width="1.8"/>
<path d="M1156.8 611.0999999999999A3.3 4.3 0 1 0 1156.8 617.0999999999999" fill="none" stroke="#63d163" stroke-width="1.9"/>
<rect x="1158.4" y="611.5999999999999" width="5.8" height="7" fill="#63d163"/>
<line x1="1158.4" y1="615.0999999999999" x2="1164.2" y2="615.0999999999999" stroke="#25232a" stroke-width="0.8"/>
<text x="1176.5" y="620.5999999999999" font-family="Liberation Sans" font-size="16.5" fill="#ffffff" textLength="348.5" lengthAdjust="spacingAndGlyphs" font-weight="bold" >CashAndStockControllApp.UI.Console.App</text>
<rect x="1099" y="653.5" width="401" height="23.5" fill="#2b292d" />
<rect x="1122.5" y="660" width="267.5" height="12" fill="#4d4b50" />
<path d="M1115.5 661V671L1108.5 666Z" fill="#a8a6aa"/>
<line x1="1099" y1="678.5" x2="1500" y2="678.5" stroke="#333135" stroke-width="1" />
<rect x="1099" y="679" width="148" height="28" fill="#1f1d21"  stroke="#38363a" stroke-width="1"/>
<text x="1106" y="699" font-family="Liberation Sans" font-size="17" fill="#e6e6e6" textLength="132.5" lengthAdjust="spacingAndGlyphs" >Solution Explorer</text>
<text x="1255" y="699" font-family="Liberation Sans" font-size="17" fill="#b8b6bb" textLength="92.0" lengthAdjust="spacingAndGlyphs" >Git Changes</text>
<line x1="1099" y1="717" x2="1500" y2="717" stroke="#38363a" stroke-width="1" />
<text x="1104" y="740" font-family="Liberation Sans" font-size="17.5" fill="#c9c7cc" textLength="78.0" lengthAdjust="spacingAndGlyphs" >Properties</text>
<rect x="1099" y="749" width="401" height="32" fill="#3a383c" />
<line x1="1099" y1="818.5" x2="1500" y2="818.5" stroke="#333135" stroke-width="1" />
<line x1="1100" y1="1062" x2="1500" y2="1062" stroke="#333135" stroke-width="1.2" />
<line x1="1087.5" y1="867" x2="1087.5" y2="1126" stroke="#333135" stroke-width="1.2" />
</svg></body></html>
